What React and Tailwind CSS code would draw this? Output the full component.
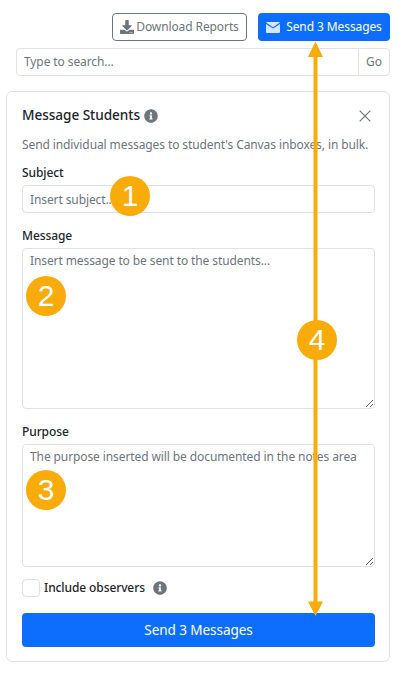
import React from 'react';
import { FaDownload, FaInfoCircle } from 'react-icons/fa';

const inputClass = 'block w-full rounded-[4px] border border-[#dee2e6] bg-white px-[7px] text-[12px] tracking-[-0.1px] text-[#212529] outline-none placeholder:text-[#6c757d]';

const Marker = ({ n, className }) => (
  <div className={`absolute flex h-10 w-10 items-center justify-center rounded-full bg-[#f9ab0a] font-['Liberation_Sans',sans-serif] text-[30px] leading-none text-white ${className}`}>
    {n}
  </div>
);

const App = () => {
  return (
    <div className="relative h-[678px] w-[402px] overflow-hidden bg-white font-['Noto_Sans',sans-serif] text-[12px] tracking-[-0.1px] text-[#212529]">
      {/* top actions */}
      <div className="flex justify-end gap-[11px] pt-[13px] pr-3">
        <button className="flex h-7 w-[135px] items-center justify-center gap-[2px] rounded-[4px] border border-[#6c757d] text-[#6c757d]">
          <FaDownload size={14} />
          Download Reports
        </button>
        <button className="flex h-7 w-[132px] items-center justify-center gap-[6px] rounded-[4px] bg-[#0d6efd] text-white">
          <svg width="14" height="11" viewBox="0 0 14 11" fill="#d6e6ff">
            <path d="M1 0h12a1 1 0 0 1 .9.6L7 5.2.1.6A1 1 0 0 1 1 0z" />
            <path d="M0 2v8a1 1 0 0 0 1 1h12a1 1 0 0 0 1-1V2L7 6.6z" />
          </svg>
          Send 3 Messages
        </button>
      </div>

      {/* search */}
      <div className="mt-[7px] mr-3 ml-4 flex h-7 rounded-[4px] border border-[#dee2e6]">
        <input className="min-w-0 flex-1 px-[7px] outline-none placeholder:text-[#6c757d]" placeholder="Type to search..." />
        <div className="flex w-[31px] items-center justify-center border-l border-[#dee2e6] text-[#6c757d]">Go</div>
      </div>

      {/* message form */}
      <div className="mt-[15px] mr-3 ml-1.5 h-[571px] rounded-[6px] border border-[#dee2e6] pt-[14px] pr-[14px] pl-[15px]">
        <div className="flex h-[19px] items-center justify-between">
          <div className="flex items-center gap-1">
            <h2 className="text-[13.6px] font-medium tracking-[-0.05px] text-[#212529]">Message Students</h2>
            <FaInfoCircle size={14} className="text-[#6c757d]" />
          </div>
          <svg width="12" height="12" viewBox="0 0 12 12" className="mr-[4px] text-[#6c757d]" fill="none" stroke="currentColor" strokeWidth="1.2">
            <path d="M.7.7l10.6 10.6M11.3.7L.7 11.3" />
          </svg>
        </div>
        <p className="mt-[10px] whitespace-nowrap leading-[19px] text-[#6c757d]">Send individual messages to student's Canvas inboxes, in bulk.</p>

        <label className="mt-[9px] block leading-[19px] font-medium">Subject</label>
        <input className={`${inputClass} mt-[3px] h-7`} placeholder="Insert subject..." />

        <label className="mt-[13px] block leading-[19px] font-medium">Message</label>
        <textarea className={`${inputClass} mt-[3px] h-[161px] py-[3px]`} placeholder="Insert message to be sent to the students..." />

        <label className="mt-[13px] block leading-[19px] font-medium">Purpose</label>
        <textarea className={`${inputClass} mt-[3px] h-[123px] py-[3px]`} placeholder="The purpose inserted will be documented in the notes area" />

        <div className="mt-3 flex h-[18px] items-center">
          <span className="h-[18px] w-[18px] rounded-[4px] border border-[#dee2e6]" />
          <span className="ml-1 font-medium">Include observers</span>
          <FaInfoCircle size={14} className="ml-2 text-[#6c757d]" />
        </div>

        <button className="mt-4 h-[34px] w-full rounded-[4px] bg-[#0d6efd] text-[13.6px] text-white">Send 3 Messages</button>
      </div>

      {/* annotation overlay */}
      <svg className="absolute top-0 left-0" width="402" height="678" fill="#f9ab0a">
        <rect x="313.5" y="54" width="4" height="550" />
        <path d="M315.5 41.5l7.5 15.5h-15zM315.5 616l7.5-14.500h-15z" />
      </svg>
      <Marker n="1" className="top-[176px] left-[110px]" />
      <Marker n="2" className="top-[276px] left-[26px]" />
      <Marker n="3" className="top-[470px] left-[26px]" />
      <Marker n="4" className="top-[320px] left-[297px]" />
    </div>
  );
};

export default App;
